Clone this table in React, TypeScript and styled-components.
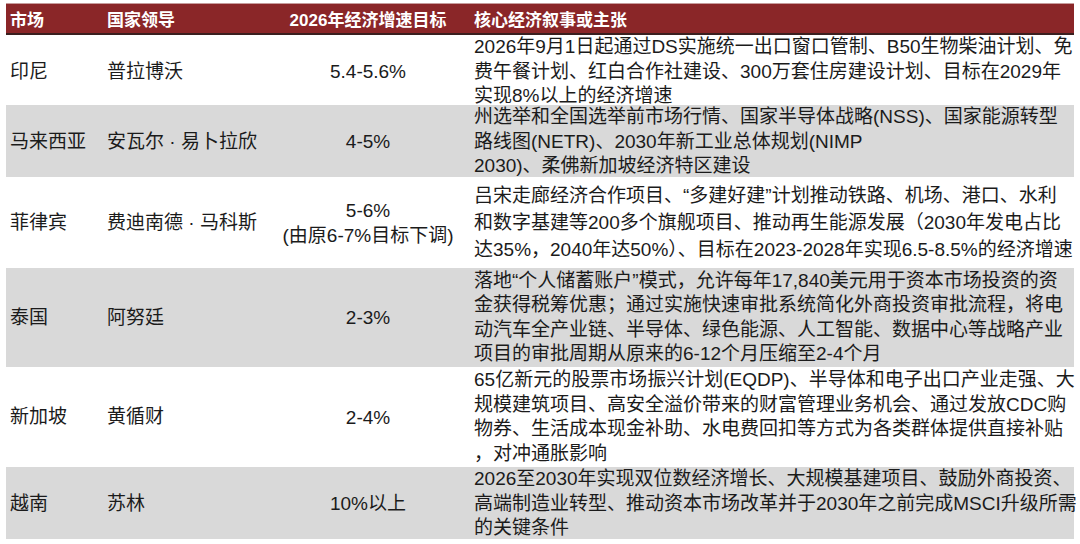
import React from 'react';
import styled, { createGlobalStyle } from 'styled-components';

type MarketRow = {
  market: string;
  leader: string;
  target: string[];
  story: string[];
  height: number;
  shaded?: boolean;
  leading?: number;
};

const rows: MarketRow[] = [
  {
    market: '印尼',
    leader: '普拉博沃',
    target: ['5.4-5.6%'],
    story: [
      '2026年9月1日起通过DS实施统一出口窗口管制、B50生物柴油计划、免',
      '费午餐计划、红白合作社建设、300万套住房建设计划、目标在2029年',
      '实现8%以上的经济增速',
    ],
    height: 70,
  },
  {
    market: '马来西亚',
    leader: '安瓦尔 · 易卜拉欣',
    target: ['4-5%'],
    story: [
      '州选举和全国选举前市场行情、国家半导体战略(NSS)、国家能源转型',
      '路线图(NETR)、2030年新工业总体规划(NIMP',
      '2030)、柔佛新加坡经济特区建设',
    ],
    height: 72,
    shaded: true,
  },
  {
    market: '菲律宾',
    leader: '费迪南德 · 马科斯',
    target: ['5-6%', '(由原6-7%目标下调)'],
    story: [
      '吕宋走廊经济合作项目、“多建好建”计划推动铁路、机场、港口、水利',
      '和数字基建等200多个旗舰项目、推动再生能源发展（2030年发电占比',
      '达35%，2040年达50%）、目标在2023-2028年实现6.5-8.5%的经济增速',
    ],
    height: 91,
    leading: 27,
  },
  {
    market: '泰国',
    leader: '阿努廷',
    target: ['2-3%'],
    story: [
      '落地“个人储蓄账户”模式，允许每年17,840美元用于资本市场投资的资',
      '金获得税筹优惠；通过实施快速审批系统简化外商投资审批流程，将电',
      '动汽车全产业链、半导体、绿色能源、人工智能、数据中心等战略产业',
      '项目的审批周期从原来的6-12个月压缩至2-4个月',
    ],
    height: 99,
    shaded: true,
  },
  {
    market: '新加坡',
    leader: '黄循财',
    target: ['2-4%'],
    story: [
      '65亿新元的股票市场振兴计划(EQDP)、半导体和电子出口产业走强、大',
      '规模建筑项目、高安全溢价带来的财富管理业务机会、通过发放CDC购',
      '物券、生活成本现金补助、水电费回扣等方式为各类群体提供直接补贴',
      '，对冲通胀影响',
    ],
    height: 100,
  },
  {
    market: '越南',
    leader: '苏林',
    target: ['10%以上'],
    story: [
      '2026至2030年实现双位数经济增长、大规模基建项目、鼓励外商投资、',
      '高端制造业转型、推动资本市场改革并于2030年之前完成MSCI升级所需',
      '的关键条件',
    ],
    height: 72,
    shaded: true,
  },
];

const App: React.FC = (): React.ReactElement => {
  return (
    <>
      <GlobalStyle />
      <Table>
        <HeaderRow>
          <HeaderCell>市场</HeaderCell>
          <HeaderCell>国家领导</HeaderCell>
          <HeaderCell $center>2026年经济增速目标</HeaderCell>
          <HeaderCell>核心经济叙事或主张</HeaderCell>
        </HeaderRow>
        {rows.map((row) => (
          <BodyRow key={row.market} $shaded={!!row.shaded} $height={row.height}>
            <Cell>{row.market}</Cell>
            <Cell>{row.leader}</Cell>
            <TargetCell>
              {row.target.map((t) => (
                <Line key={t}>{t}</Line>
              ))}
            </TargetCell>
            <StoryCell $leading={row.leading ?? 24.5}>
              {row.story.map((s) => (
                <Line key={s}>{s}</Line>
              ))}
            </StoryCell>
          </BodyRow>
        ))}
      </Table>
    </>
  );
};

const GlobalStyle = createGlobalStyle`
  html, body {
    margin: 0;
    padding: 0;
    background: #ffffff;
  }
  body {
    font-family: "Liberation Sans", "Noto Sans CJK SC", sans-serif;
    color: #1b1b1b;
  }
`;

const Table = styled.div`
  display: flex;
  flex-direction: column;
  width: 1068px;
  margin: 4px 0 0 6px;
`;

const columns = '97px 163px 204px 1fr';

const HeaderRow = styled.div`
  display: grid;
  grid-template-columns: ${columns};
  align-items: center;
  height: 29px;
  background: #8a2628;
  border-bottom: 2px solid #3a1f1f;
  box-shadow: 0 -1px 0 #c79c9c;
`;

const HeaderCell = styled.div<{ $center?: boolean }>`
  padding-left: ${({ $center }) => ($center ? '0' : '4px')};
  text-align: ${({ $center }) => ($center ? 'center' : 'left')};
  color: #ffffff;
  font-size: 17px;
  font-weight: 700;
  white-space: nowrap;
`;

const BodyRow = styled.div<{ $shaded: boolean; $height: number }>`
  display: grid;
  grid-template-columns: ${columns};
  align-items: center;
  height: ${({ $height }) => $height}px;
  background: ${({ $shaded }) => ($shaded ? '#d9d9d9' : '#ffffff')};
  font-size: 19px;
`;

const Cell = styled.div`
  padding-left: 4px;
  white-space: nowrap;
  line-height: 24px;
`;

const TargetCell = styled.div`
  text-align: center;
  line-height: 25px;
`;

const StoryCell = styled.div<{ $leading: number }>`
  padding-left: 4px;
  line-height: ${({ $leading }) => $leading}px;
`;

const Line = styled.span`
  display: block;
  white-space: nowrap;
`;

export default App;
